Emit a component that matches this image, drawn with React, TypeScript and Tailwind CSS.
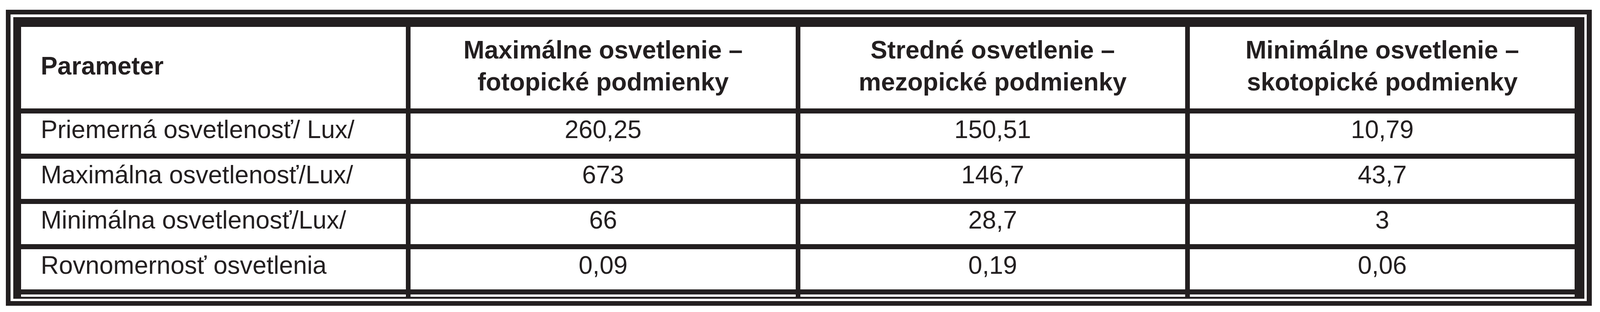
const headers = [
  { label: ["Parameter"], left: true },
  { label: ["Maximálne osvetlenie –", "fotopické podmienky"] },
  { label: ["Stredné osvetlenie –", "mezopické podmienky"] },
  { label: ["Minimálne osvetlenie –", "skotopické podmienky"] },
];

const rows = [
  ["Priemerná osvetlenosť/ Lux/", "260,25", "150,51", "10,79"],
  ["Maximálna osvetlenosť/Lux/", "673", "146,7", "43,7"],
  ["Minimálna osvetlenosť/Lux/", "66", "28,7", "3"],
  ["Rovnomernosť osvetlenia", "0,09", "0,19", "0,06"],
];

export default function App() {
  return (
    <div className="w-full h-[800px] bg-white pt-[25px] pl-[0.363%] pr-[0.504%] text-[#231f20] font-['Liberation_Sans',Arial,sans-serif]">
      {/* outer frame */}
      <div className="border-[#231f20] border-t-[12px] border-l-[12px] border-r-[13px] border-b-[12px] pt-[7px] pl-[7px] pr-[6px] pb-[6px] bg-white">
        {/* inner frame */}
        <div className="bg-[#231f20] pt-[25px] pl-[20px] pr-[25px] pb-[5px]">
          <div className="grid grid-cols-4 grid-rows-[209px_repeat(4,103px)_6px] gap-x-[12px] gap-y-[13px]">
            {headers.map((h, i) => (
              <div
                key={i}
                className={`bg-white flex items-center pb-[10px] text-[1.57vw] leading-[82px] font-bold ${
                  h.left ? "pl-[1.23vw]" : "justify-center text-center"
                }`}
              >
                <div>
                  {h.label.map((line) => (
                    <div key={line} className="whitespace-nowrap">{line}</div>
                  ))}
                </div>
              </div>
            ))}
            {rows.map((row) =>
              row.map((cell, j) => (
                <div
                  key={row[0] + j}
                  className={`bg-white flex items-center pb-[22px] text-[1.57vw] leading-[82px] whitespace-nowrap ${
                    j === 0 ? "pl-[1.23vw]" : "justify-center"
                  }`}
                >
                  {cell}
                </div>
              ))
            )}
            <div className="bg-white" />
            <div className="bg-white" />
            <div className="bg-white" />
            <div className="bg-white" />
          </div>
        </div>
      </div>
    </div>
  );
}
